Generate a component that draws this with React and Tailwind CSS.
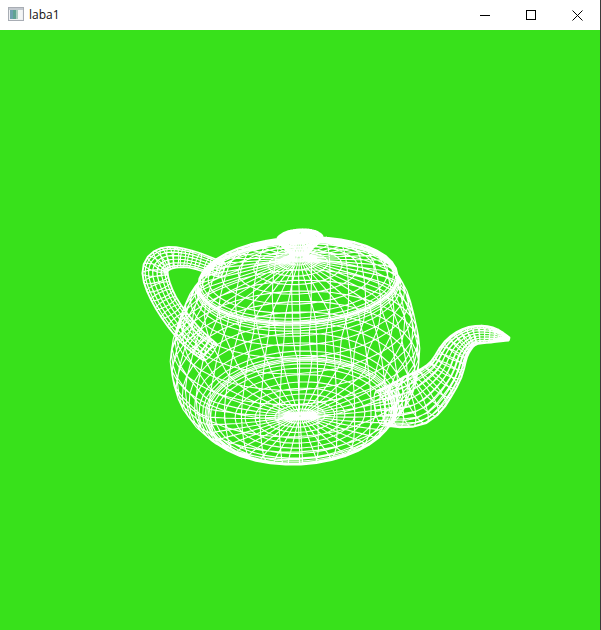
import { useMemo } from "react";

const MERIDIANS = 40;
const TILT = (-3 * Math.PI) / 180;

// rings of the lathe part, as they land on screen: cx, cy, rx, ry
const bodyRings = [
    [300, 233, 1, 1],
    [300, 234, 14, 4],
    [300, 238, 23, 8],
    [299, 248, 14, 5],
    [299, 256, 8, 3],
    [299, 260, 12, 5],
    [298, 264, 30, 12],
    [298, 270, 60, 24],
    [298, 276, 90, 37],
    [298, 279, 98, 42],
    [298, 280, 100, 43],
    [298, 282, 100, 42],
    [298, 285, 101, 43],
    [298, 290, 103, 46],
    [297, 305, 112, 53],
    [296, 330, 120, 60],
    [295, 355, 125, 64],
    [296, 382, 120, 70],
    [296, 398, 107, 65],
    [298, 408, 99, 57],
    [300, 411, 95, 53],
    [300, 412, 92, 51],
    [300, 413, 85, 45],
    [300, 415, 65, 33],
    [300, 416, 45, 22],
    [300, 416, 25, 11],
    [300, 416, 10, 4],
    [300, 416, 1, 1],
];

// tubes: centre x, centre y, radius
const handleSpine = [
    [222, 270, 8],
    [190, 259, 9],
    [165, 259, 12],
    [155, 273, 13],
    [166, 303, 12],
    [190, 335, 12],
    [210, 352, 11],
];

const spoutSpine = [
    [380, 408, 18],
    [415, 400, 26],
    [442, 376, 19],
    [456, 349, 14],
    [472, 336, 10],
    [492, 335, 8],
    [509, 339, 2],
];

function catmull(a, b, c, d, t) {
    return a.map((_, k) => {
        const p0 = a[k], p1 = b[k], p2 = c[k], p3 = d[k];
        return (
            0.5 *
            (2 * p1 +
                (p2 - p0) * t +
                (2 * p0 - 5 * p1 + 4 * p2 - p3) * t * t +
                (3 * p1 - p0 - 3 * p2 + p3) * t * t * t)
        );
    });
}

function resample(keys, steps) {
    const out = [];
    for (let i = 0; i < keys.length - 1; i++) {
        const a = keys[Math.max(i - 1, 0)];
        const d = keys[Math.min(i + 2, keys.length - 1)];
        for (let s = 0; s < steps; s++) {
            out.push(catmull(a, keys[i], keys[i + 1], d, s / steps));
        }
    }
    out.push(keys[keys.length - 1]);
    return out;
}

function gridPath(grid) {
    let d = "";
    const line = (pts) => {
        d += "M" + pts.map((p) => p[0].toFixed(1) + " " + p[1].toFixed(1)).join("L");
    };
    grid.forEach((row) => line(row));
    for (let j = 0; j < grid[0].length; j++) line(grid.map((row) => row[j]));
    return d;
}

function lathe() {
    const rings = resample(bodyRings, 2);
    return rings.map(([cx, cy, rx, ry]) => {
        const row = [];
        for (let j = 0; j <= MERIDIANS; j++) {
            const a = (j / MERIDIANS) * Math.PI * 2;
            const x = rx * Math.cos(a);
            const y = ry * Math.sin(a);
            row.push([
                cx + x * Math.cos(TILT) - y * Math.sin(TILT),
                cy + x * Math.sin(TILT) + y * Math.cos(TILT),
            ]);
        }
        return row;
    });
}

function tube(spine, steps, wires, flat) {
    const pts = resample(spine, steps);
    return pts.map((p, i) => {
        const prev = pts[Math.max(i - 1, 0)];
        const next = pts[Math.min(i + 1, pts.length - 1)];
        const dx = next[0] - prev[0];
        const dy = next[1] - prev[1];
        const len = Math.hypot(dx, dy) || 1;
        const row = [];
        for (let j = 0; j <= wires; j++) {
            const a = (j / wires) * Math.PI * 2;
            const n = p[2] * Math.cos(a);
            const t = p[2] * flat * Math.sin(a);
            row.push([
                p[0] - (dy / len) * n + (dx / len) * t,
                p[1] + (dx / len) * n + (dy / len) * t,
            ]);
        }
        return row;
    });
}

function Teapot() {
    const d = useMemo(
        () =>
            gridPath(lathe()) +
            gridPath(tube(handleSpine, 4, 18, 0.25)) +
            gridPath(tube(spoutSpine, 4, 22, 0.3)),
        []
    );
    return (
        <svg viewBox="0 30 600 600" className="block h-full w-full">
            <path d={d} fill="none" stroke="#ffffff" strokeWidth="1.1" />
        </svg>
    );
}

export default function App() {
    return (
        <div className="flex h-[630px] w-[601px] flex-col border-r border-[#3a3a3a] bg-white">
            <div className="flex h-[30px] shrink-0 items-center justify-between">
                <div className="flex items-center gap-[5px] pl-2">
                    <svg width="16" height="16" viewBox="0 0 16 16">
                        <rect x="0.5" y="0.5" width="15" height="13" fill="#eef0f2" stroke="#a8adb4" />
                        <rect x="1" y="1" width="14" height="2" fill="#c4c9d0" />
                        <rect x="2" y="3" width="3" height="9" fill="#6f9fb0" />
                        <rect x="5" y="3" width="3" height="9" fill="#5fa392" />
                        <rect x="8" y="3" width="2" height="9" fill="#a9cbbf" />
                        <rect x="10" y="3" width="4" height="9" fill="#f4f6f6" />
                    </svg>
                    <span className="text-xs text-[#101010] font-['Open_Sans',sans-serif]">laba1</span>
                </div>
                <div className="flex h-full">
                    <button className="flex w-[46px] items-center justify-center">
                        <span className="h-px w-[10px] bg-black" />
                    </button>
                    <button className="flex w-[46px] items-center justify-center">
                        <span className="h-[10px] w-[10px] border border-black" />
                    </button>
                    <button className="flex w-[46px] items-center justify-center">
                        <svg width="11" height="11" viewBox="0 0 11 11">
                            <path d="M0.5 0.5L10.5 10.5M10.5 0.5L0.5 10.5" stroke="#000000" strokeWidth="1" />
                        </svg>
                    </button>
                </div>
            </div>
            <div className="min-h-0 flex-1 bg-[#38e11b]">
                <Teapot />
            </div>
        </div>
    );
}
